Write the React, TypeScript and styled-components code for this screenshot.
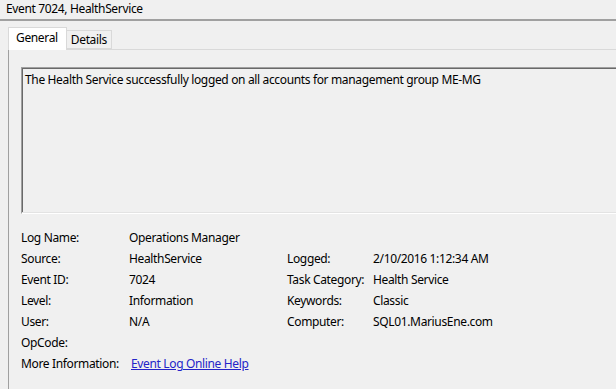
import React from 'react';
import styled, { createGlobalStyle } from 'styled-components';

const GlobalStyle = createGlobalStyle`
  html, body {
    margin: 0;
    padding: 0;
    background: #f0f0f0;
    overflow: hidden;
  }
  body {
    font-family: 'Segoe UI', 'Noto Sans', 'Liberation Sans', sans-serif;
    font-size: 12px;
    letter-spacing: -0.35px;
    color: #000;
  }
`;

const Window = styled.div`
  width: 616px;
  height: 389px;
  overflow: hidden;
  background: #f0f0f0;
`;

const TitleBar = styled.div`
  height: 19px;
  line-height: 18px;
  padding-left: 6px;
  border-bottom: 2px solid #a0a0a0;
`;

const Body = styled.div`
  width: 660px;
  padding: 6px 0 0 8px;
`;

const TabStrip = styled.div`
  display: flex;
  align-items: flex-end;
  height: 22px;
  position: relative;
  z-index: 1;
`;

const Tab = styled.div<{ $active?: boolean }>`
  box-sizing: border-box;
  height: ${(p) => (p.$active ? '23px' : '19px')};
  padding: 0 ${(p) => (p.$active ? '8px 0 7px' : '4px 0 4px')};
  line-height: ${(p) => (p.$active ? '20px' : '18px')};
  background: ${(p) => (p.$active ? '#ffffff' : '#f0f0f0')};
  border: 1px solid #d9d9d9;
  border-bottom: ${(p) => (p.$active ? 'none' : '1px solid #d9d9d9')};
  margin-bottom: ${(p) => (p.$active ? '-1px' : '0')};
  margin-right: ${(p) => (p.$active ? '-1px' : '0')};
`;

const Panel = styled.div`
  border: 1px solid #d9d9d9;
  border-left-color: #a0a0a0;
  height: 340px;
  padding: 17px 0 0 12px;
`;

const MessageBox = styled.div`
  box-sizing: border-box;
  height: 147px;
  border-top: 1px solid #a0a0a0;
  border-left: 1px solid #a0a0a0;
  border-bottom: 1px solid #ffffff;
  box-shadow: inset 1px 1px 0 #696969;
  padding: 4px 3px;
  line-height: 16px;
  position: relative;

  &::after {
    content: '';
    position: absolute;
    left: 0;
    right: 0;
    bottom: 0;
    height: 1px;
    background: #e3e3e3;
  }
`;

const Fields = styled.div`
  display: grid;
  grid-template-columns: 108px 158px 86px auto;
  grid-auto-rows: 21px;
  align-items: center;
  margin-top: 13px;
`;

const Label = styled.div`
  white-space: nowrap;
`;

const Value = styled.div`
  white-space: nowrap;
`;

const HelpLink = styled.a`
  color: #2424c8;
  text-decoration: underline;
  margin-left: 2px;
`;

const rows: [string, string, string, string][] = [
  ['Log Name:', 'Operations Manager', '', ''],
  ['Source:', 'HealthService', 'Logged:', '2/10/2016 1:12:34 AM'],
  ['Event ID:', '7024', 'Task Category:', 'Health Service'],
  ['Level:', 'Information', 'Keywords:', 'Classic'],
  ['User:', 'N/A', 'Computer:', 'SQL01.MariusEne.com'],
  ['OpCode:', '', '', ''],
];

export default function App() {
  return (
    <>
      <GlobalStyle />
      <Window>
        <TitleBar>Event 7024, HealthService</TitleBar>
        <Body>
          <TabStrip>
            <Tab $active>General</Tab>
            <Tab>Details</Tab>
          </TabStrip>
          <Panel>
            <MessageBox>
              The Health Service successfully logged on all accounts for management group ME-MG
            </MessageBox>
            <Fields>
              {rows.map((r) => (
                <React.Fragment key={r[0]}>
                  <Label>{r[0]}</Label>
                  <Value>{r[1]}</Value>
                  <Label>{r[2]}</Label>
                  <Value>{r[3]}</Value>
                </React.Fragment>
              ))}
              <Label>More Information:</Label>
              <Value>
                <HelpLink href="#">Event Log Online Help</HelpLink>
              </Value>
            </Fields>
          </Panel>
        </Body>
      </Window>
    </>
  );
}
